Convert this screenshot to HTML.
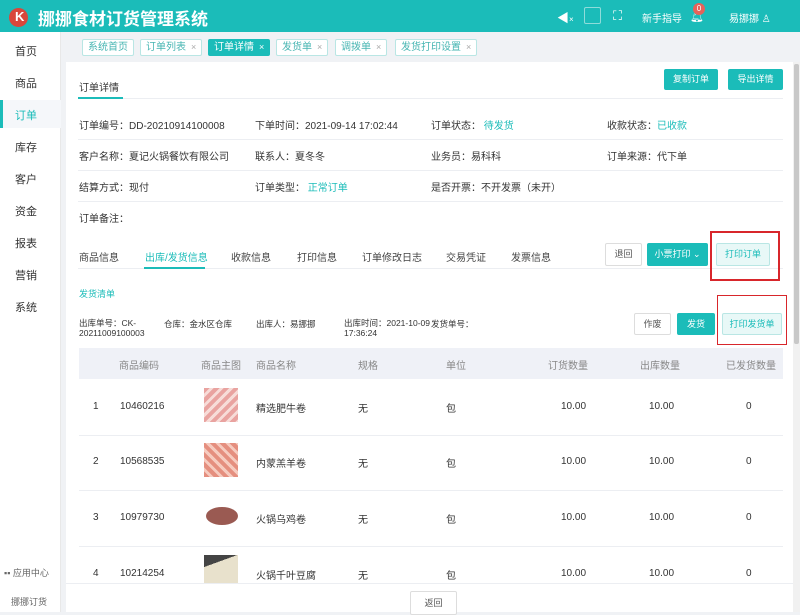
<!DOCTYPE html>
<html><head><meta charset="utf-8"><style>
*{margin:0;padding:0;box-sizing:border-box}
body{width:800px;height:612px;overflow:hidden;background:#f0f2f5;font-family:"Liberation Sans","Noto Sans CJK SC",sans-serif;font-size:10px;color:#333;position:relative}
.a{position:absolute;white-space:nowrap}
.hd{left:0;top:0;width:800px;height:32px;background:#1bbcb9}
.sb{left:0;top:32px;width:61px;height:580px;background:#fff;border-right:1px solid #e8e8e8}
.card{left:66px;top:62px;width:727px;height:550px;background:#fff}
.tag{top:39px;height:17px;border:1px solid #b9e6e4;background:#fff;color:#46b5b2;font-size:10px;line-height:15px;padding:0 5px;border-radius:2px}
.tag i{font-style:normal;color:#aaa;margin-left:5px;font-size:9px}
.btn{height:21px;line-height:19px;text-align:center;border-radius:2px;font-size:9px}
.tb{background:#1bbcb9;color:#fff;border:1px solid #1bbcb9}
.wb{background:#fff;color:#555;border:1px solid #ddd}
.lb{background:#e8f8f7;color:#1bbcb9;border:1px solid #b9e6e4}
.ln{height:1px;background:#eceef2}
.g{color:#1bbcb9}
.img{width:34px;height:34px}
.si{left:15px;font-size:11px}
.r{top:401px}
</style></head><body>
<div class="a hd"></div>
<div class="a" style="left:9px;top:8px;width:19px;height:19px;border-radius:50%;background:#d9473b"></div>
<div class="a" style="left:15px;top:9px;color:#fff;font-weight:bold;font-size:13px">K</div>
<div class="a" style="left:38px;top:5px;color:#fff;font-size:17px;font-weight:bold">挪挪食材订货管理系统</div>
<div class="a" style="left:557px;top:9px;color:#fff;font-size:12px">◀<span style="font-size:8px">×</span></div>
<div class="a" style="left:584px;top:7px;width:17px;height:17px;border:1px solid #8fdcda;border-radius:2px"></div>
<div class="a" style="left:613px;top:8px;color:#fff;font-size:13px">⛶</div>
<div class="a" style="left:642px;top:10px;color:#fff;font-size:10px">新手指导</div>
<div class="a" style="left:690px;top:10px;color:#fff;font-size:11px">🔔︎</div>
<div class="a" style="left:693px;top:3px;width:12px;height:12px;border-radius:50%;background:#e6625a;color:#fff;font-size:8px;text-align:center;line-height:12px">0</div>
<div class="a" style="left:729px;top:10px;color:#fff;font-size:10px">易挪挪 ♙</div>

<div class="a sb"></div>
<div class="a" style="left:0;top:100px;width:61px;height:28px;background:#f5f7fa"></div>
<div class="a" style="left:0;top:100px;width:3px;height:28px;background:#1bbcb9"></div>
<div class="a si" style="top:43px">首页</div>
<div class="a si" style="top:75px">商品</div>
<div class="a si g" style="top:107px">订单</div>
<div class="a si" style="top:139px">库存</div>
<div class="a si" style="top:171px">客户</div>
<div class="a si" style="top:203px">资金</div>
<div class="a si" style="top:235px">报表</div>
<div class="a si" style="top:267px">营销</div>
<div class="a si" style="top:299px">系统</div>
<div class="a" style="left:4px;top:566px;color:#666;font-size:9px">▪▪ 应用中心</div>
<div class="a" style="left:11px;top:595px;color:#666;font-size:9px">挪挪订货</div>

<div class="a tag" style="left:82px">系统首页</div>
<div class="a tag" style="left:140px">订单列表<i>×</i></div>
<div class="a tag" style="left:208px;background:#1bbcb9;color:#fff;border-color:#1bbcb9">订单详情<i style="color:#fff">×</i></div>
<div class="a tag" style="left:276px">发货单<i>×</i></div>
<div class="a tag" style="left:335px">调拨单<i>×</i></div>
<div class="a tag" style="left:395px">发货打印设置<i>×</i></div>

<div class="a card"></div>
<div class="a" style="left:793px;top:62px;width:7px;height:550px;background:#f1f1f1"></div>
<div class="a" style="left:794px;top:64px;width:5px;height:280px;background:#c8c8c8;border-radius:2px"></div>
<div class="a" style="left:79px;top:79px;font-size:10px">订单详情</div>
<div class="a ln" style="left:78px;top:98px;width:705px"></div>
<div class="a" style="left:78px;top:97px;width:45px;height:2px;background:#1bbcb9"></div>
<div class="a btn tb" style="left:664px;top:69px;width:54px">复制订单</div>
<div class="a btn tb" style="left:728px;top:69px;width:55px">导出详情</div>

<div class="a" style="left:79px;top:117px">订单编号：DD-20210914100008</div>
<div class="a" style="left:255px;top:117px">下单时间：2021-09-14 17:02:44</div>
<div class="a" style="left:431px;top:117px">订单状态： <span class="g">待发货</span></div>
<div class="a" style="left:607px;top:117px">收款状态：<span class="g">已收款</span></div>
<div class="a ln" style="left:78px;top:139px;width:705px"></div>
<div class="a" style="left:79px;top:148px">客户名称：夏记火锅餐饮有限公司</div>
<div class="a" style="left:255px;top:148px">联系人：夏冬冬</div>
<div class="a" style="left:431px;top:148px">业务员：易科科</div>
<div class="a" style="left:607px;top:148px">订单来源：代下单</div>
<div class="a ln" style="left:78px;top:170px;width:705px"></div>
<div class="a" style="left:79px;top:179px">结算方式：现付</div>
<div class="a" style="left:255px;top:179px">订单类型： <span class="g">正常订单</span></div>
<div class="a" style="left:431px;top:179px">是否开票：不开发票（未开）</div>
<div class="a ln" style="left:78px;top:201px;width:705px"></div>
<div class="a" style="left:79px;top:210px">订单备注：</div>

<div class="a" style="left:79px;top:249px;color:#444">商品信息</div>
<div class="a g" style="left:145px;top:249px">出库/发货信息</div>
<div class="a" style="left:231px;top:249px;color:#444">收款信息</div>
<div class="a" style="left:297px;top:249px;color:#444">打印信息</div>
<div class="a" style="left:362px;top:249px;color:#444">订单修改日志</div>
<div class="a" style="left:446px;top:249px;color:#444">交易凭证</div>
<div class="a" style="left:511px;top:249px;color:#444">发票信息</div>
<div class="a ln" style="left:78px;top:268px;width:705px"></div>
<div class="a" style="left:144px;top:267px;width:61px;height:2px;background:#1bbcb9"></div>
<div class="a btn wb" style="left:605px;top:243px;width:37px;height:23px;line-height:21px">退回</div>
<div class="a btn tb" style="left:647px;top:243px;width:61px;height:23px;line-height:21px">小票打印 ⌄</div>
<div class="a btn lb" style="left:716px;top:243px;width:54px;height:23px;line-height:21px">打印订单</div>
<div class="a" style="left:710px;top:231px;width:70px;height:50px;border:2px solid #d8262b"></div>

<div class="a g" style="left:79px;top:287px;font-size:9px">发货清单</div>
<div class="a" style="left:79px;top:318px;font-size:8.5px;line-height:10px">出库单号：CK-<br>20211009100003</div>
<div class="a" style="left:164px;top:318px;font-size:8.5px">仓库：金水区仓库</div>
<div class="a" style="left:256px;top:318px;font-size:8.5px">出库人：易挪挪</div>
<div class="a" style="left:344px;top:318px;font-size:8.5px;line-height:10px">出库时间：2021-10-09<br>17:36:24</div>
<div class="a" style="left:431px;top:318px;font-size:8.5px">发货单号：</div>
<div class="a btn wb" style="left:634px;top:313px;width:37px;height:22px;line-height:20px">作废</div>
<div class="a btn tb" style="left:677px;top:313px;width:38px;height:22px;line-height:20px">发货</div>
<div class="a btn lb" style="left:722px;top:313px;width:60px;height:22px;line-height:20px">打印发货单</div>
<div class="a" style="left:717px;top:295px;width:70px;height:50px;border:1px solid #d8262b"></div>

<div class="a" style="left:79px;top:348px;width:704px;height:31px;background:#eff1f7"></div>
<div class="a" style="top:357px;left:119px;color:#888">商品编码</div>
<div class="a" style="top:357px;left:201px;color:#888">商品主图</div>
<div class="a" style="top:357px;left:256px;color:#888">商品名称</div>
<div class="a" style="top:357px;left:358px;color:#888">规格</div>
<div class="a" style="top:357px;left:446px;color:#888">单位</div>
<div class="a" style="top:357px;left:548px;color:#888">订货数量</div>
<div class="a" style="top:357px;left:640px;color:#888">出库数量</div>
<div class="a" style="top:357px;left:726px;color:#888">已发货数量</div>

<div class="a ln" style="left:79px;top:435px;width:704px"></div>
<div class="a ln" style="left:79px;top:490px;width:704px"></div>
<div class="a ln" style="left:79px;top:546px;width:704px"></div>

<div class="a img" style="left:204px;top:388px;background:repeating-linear-gradient(135deg,#e9a3a0 0 4px,#f7dcd8 4px 7px)"></div>
<div class="a img" style="left:204px;top:443px;background:repeating-linear-gradient(45deg,#e58f7f 0 4px,#f6cbbf 4px 7px)"></div>
<div class="a" style="left:206px;top:507px;width:32px;height:18px;border-radius:50%;background:#9a5a52"></div>
<div class="a img" style="left:204px;top:555px;height:28px;background:linear-gradient(160deg,#444 0 30%,#e8e1cc 30%)"></div>

<div class="a" style="left:93px;top:401px">1</div><div class="a" style="left:120px;top:401px">10460216</div><div class="a" style="left:256px;top:400px">精选肥牛卷</div><div class="a" style="left:358px;top:400px">无</div><div class="a" style="left:446px;top:400px">包</div><div class="a" style="left:561px;top:401px">10.00</div><div class="a" style="left:649px;top:401px">10.00</div><div class="a" style="left:746px;top:401px">0</div>
<div class="a" style="left:93px;top:456px">2</div><div class="a" style="left:120px;top:456px">10568535</div><div class="a" style="left:256px;top:455px">内蒙羔羊卷</div><div class="a" style="left:358px;top:455px">无</div><div class="a" style="left:446px;top:455px">包</div><div class="a" style="left:561px;top:456px">10.00</div><div class="a" style="left:649px;top:456px">10.00</div><div class="a" style="left:746px;top:456px">0</div>
<div class="a" style="left:93px;top:512px">3</div><div class="a" style="left:120px;top:512px">10979730</div><div class="a" style="left:256px;top:511px">火锅乌鸡卷</div><div class="a" style="left:358px;top:511px">无</div><div class="a" style="left:446px;top:511px">包</div><div class="a" style="left:561px;top:512px">10.00</div><div class="a" style="left:649px;top:512px">10.00</div><div class="a" style="left:746px;top:512px">0</div>
<div class="a" style="left:93px;top:568px">4</div><div class="a" style="left:120px;top:568px">10214254</div><div class="a" style="left:256px;top:567px">火锅千叶豆腐</div><div class="a" style="left:358px;top:567px">无</div><div class="a" style="left:446px;top:567px">包</div><div class="a" style="left:561px;top:568px">10.00</div><div class="a" style="left:649px;top:568px">10.00</div><div class="a" style="left:746px;top:568px">0</div>

<div class="a" style="left:66px;top:583px;width:727px;height:29px;background:#fff;border-top:1px solid #eceef2"></div>
<div class="a btn wb" style="left:410px;top:591px;width:47px;height:24px;line-height:22px">返回</div>
</body></html>
